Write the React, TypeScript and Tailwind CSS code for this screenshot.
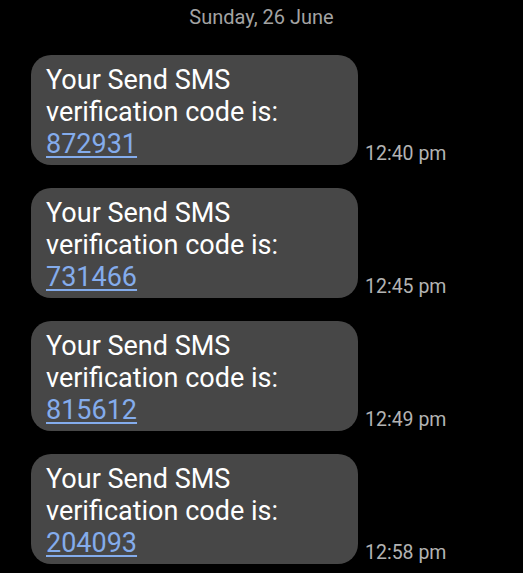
const messages = [
  { code: "872931", time: "12:40 pm" },
  { code: "731466", time: "12:45 pm" },
  { code: "815612", time: "12:49 pm" },
  { code: "204093", time: "12:58 pm" },
];

export default function App() {
  return (
    <main className="w-[523px] h-[573px] overflow-hidden bg-black font-['Roboto',sans-serif]">
      {/* Date header */}
      <div className="pt-[5px] text-center text-[20px] leading-[24px] text-[#a3a3a3]">
        Sunday, 26 June
      </div>

      {/* Message list */}
      <div className="mt-[26px] flex flex-col gap-[23px] pl-[31px]">
        {messages.map((m) => (
          <div key={m.code} className="flex items-end gap-[7px]">
            <div className="w-[327px] h-[110px] rounded-[20px] bg-[#474747] pl-[15px] pt-[9px] text-[27px] leading-[32px] text-white">
              <p>Your Send SMS</p>
              <p>verification code is:</p>
              <p>
                <span className="text-[#84acec] underline decoration-[1.5px] underline-offset-[3px]">
                  {m.code}
                </span>
              </p>
            </div>
            <span className="mb-[1px] text-[19.5px] leading-[20px] text-[#b3b3b3]">{m.time}</span>
          </div>
        ))}
      </div>
    </main>
  );
}
